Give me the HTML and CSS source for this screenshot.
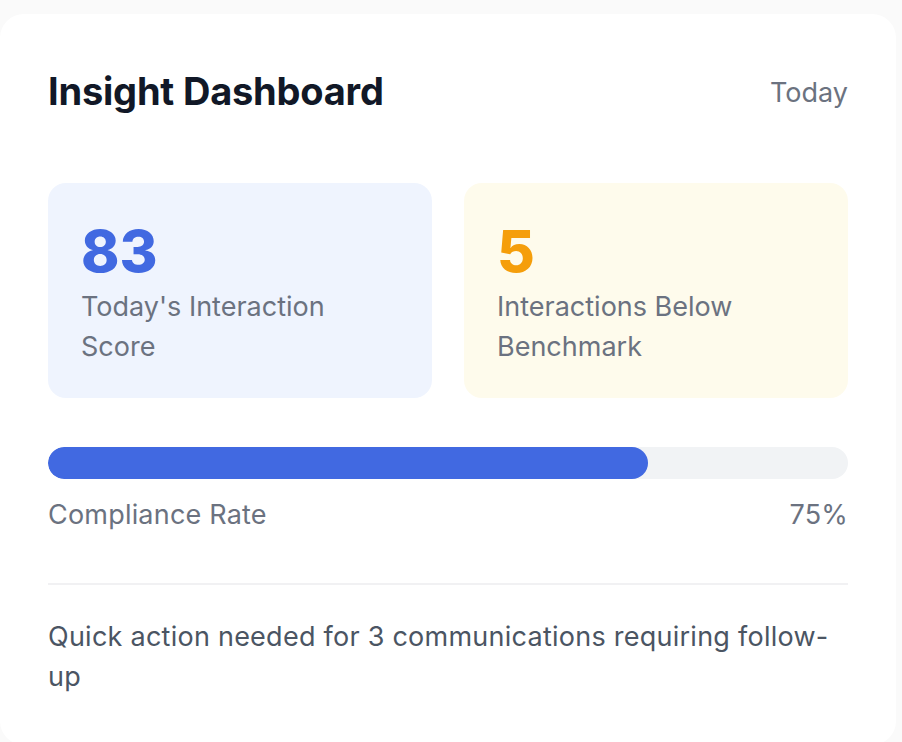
FILE: index.html
```html
<!DOCTYPE html>
<html lang="en">
<head>
<meta charset="utf-8">
<title>Insight Dashboard</title>
<link rel="stylesheet" href="styles.css">
</head>
<body>
  <div class="card">
    <div class="header">
      <h1 class="title">Insight Dashboard</h1>
      <span class="period">Today</span>
    </div>
    <div class="stats">
      <div class="stat stat-blue">
        <div class="stat-value">83</div>
        <div class="stat-label">Today's Interaction Score</div>
      </div>
      <div class="stat stat-amber">
        <div class="stat-value">5</div>
        <div class="stat-label">Interactions Below Benchmark</div>
      </div>
    </div>
    <div class="progress">
      <div class="progress-fill" style="width: 75%"></div>
    </div>
    <div class="progress-meta">
      <span>Compliance Rate</span>
      <span>75%</span>
    </div>
    <div class="divider"></div>
    <p class="note">Quick action needed for 3 communications requiring follow-up</p>
  </div>
</body>
</html>
```

FILE: styles.css
```css
* { box-sizing: border-box; }

html, body {
  margin: 0;
  padding: 0;
}

body {
  background: #fafafa;
  font-family: Inter, "Noto Sans", "Liberation Sans", sans-serif;
  width: 902px;
  height: 742px;
  overflow: hidden;
}

.card {
  margin: 14px 6px 0 0;
  background: #ffffff;
  border-radius: 24px;
  padding: 51px 48px 48px 48px;
  min-height: 728px;
}

.header {
  display: flex;
  justify-content: space-between;
  align-items: center;
  margin-bottom: 66px;
}

.title {
  margin: 0;
  font-size: 38px;
  line-height: 52px;
  font-weight: 700;
  color: #111827;
  letter-spacing: -0.2px;
}

.period {
  font-size: 27px;
  line-height: 40px;
  color: #6b7280;
  padding-top: 3px;
}

.stats {
  display: grid;
  grid-template-columns: 1fr 1fr;
  gap: 32px;
}

.stat {
  border-radius: 18px;
  padding: 32px 33px;
  height: 215px;
}

.stat-blue { background: #eff4fe; }
.stat-amber { background: #fefbec; }

.stat-value {
  font-size: 58px;
  line-height: 72px;
  font-weight: 800;
}

.stat-blue .stat-value { color: #4169e1; }
.stat-amber .stat-value { color: #f59e0b; }

.stat-label {
  font-size: 27px;
  line-height: 40px;
  color: #6b7280;
}

.progress {
  margin-top: 49px;
  height: 32px;
  border-radius: 16px;
  background: #f1f3f5;
  overflow: hidden;
}

.progress-fill {
  height: 100%;
  background: #4169e1;
  border-radius: 16px;
}

.progress-meta {
  display: flex;
  justify-content: space-between;
  margin-top: 16px;
  font-size: 27px;
  line-height: 40px;
  color: #6b7280;
  letter-spacing: 0.2px;
}

.divider {
  margin-top: 48px;
  height: 2px;
  background: #f1f1f3;
}

.note {
  margin: 32px 0 0;
  font-size: 27px;
  line-height: 40px;
  color: #4b5563;
  letter-spacing: 0.25px;
}
```
